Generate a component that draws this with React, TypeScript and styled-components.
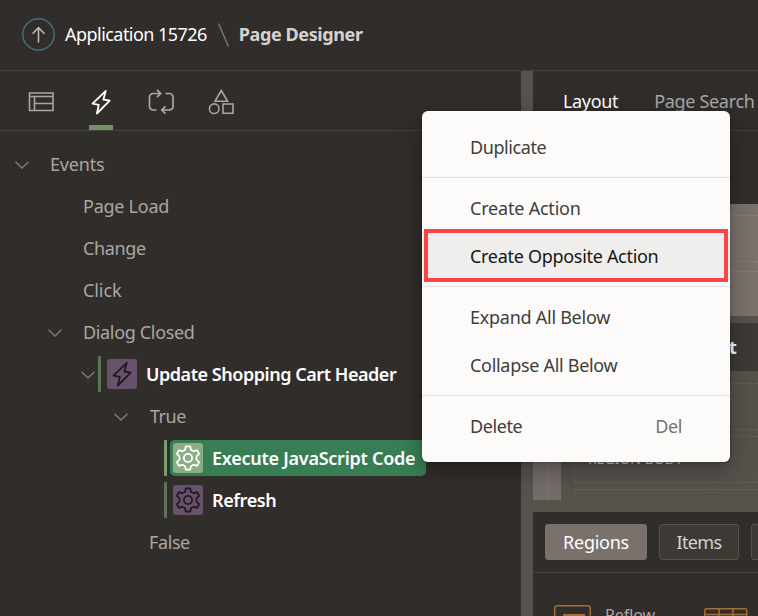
import React from 'react';
import styled, { createGlobalStyle } from 'styled-components';

const GlobalStyle = createGlobalStyle`
  * { box-sizing: border-box; }
  body {
    margin: 0;
    overflow: hidden;
    background: #312d2a;
    font-family: "Noto Sans", sans-serif;
    font-size: 18px;
    line-height: 24px;
    white-space: nowrap;
  }
`;

const Page = styled.div`
  position: relative;
  display: flex;
  flex-direction: column;
  width: 758px;
  height: 616px;
  overflow: hidden;
  background: #312d2a;
`;

const Label = styled.span<{ $track?: number }>`
  letter-spacing: ${p => p.$track ?? -0.25}px;
`;

const Header = styled.header`
  display: flex;
  align-items: center;
  flex: none;
  height: 71px;
  padding: 0 22px 1px;
  border-bottom: 1px solid #45413d;
  color: #fff;
`;

const Crumb = styled(Label)`
  padding-bottom: 2px;
`;

const Divider = styled.svg`
  margin: 1px 10px 0 11px;
`;

const UpIcon = styled.svg`
  margin-right: 10px;
`;

const PageTitle = styled(Crumb)`
  color: #d5d3d1;
  font-weight: 700;
`;

const Workspace = styled.main`
  display: flex;
  flex: 1;
  min-height: 0;
`;

const TreePane = styled.section`
  width: 521px;
  flex: none;
`;

const Toolbar = styled.nav`
  display: flex;
  height: 60px;
  padding-left: 11px;
  border-bottom: 1px solid #45413d;
`;

const ToolTab = styled.div<{ $active?: boolean }>`
  display: flex;
  flex-direction: column;
  align-items: center;
  width: 60px;
  padding-top: 15px;
  color: ${p => (p.$active ? '#fff' : '#aaa6a2')};
  &::after {
    content: '';
    width: 24px;
    height: 5px;
    margin-top: 7px;
    background: ${p => (p.$active ? '#6b9465' : 'transparent')};
  }
`;

const Tree = styled.div`
  padding-top: 12px;
`;

const TreeRow = styled.div<{ $indent: number; $strong?: boolean }>`
  display: flex;
  align-items: center;
  height: 42px;
  padding-left: ${p => p.$indent}px;
  color: ${p => (p.$strong ? '#fff' : '#aaa7a3')};
  font-weight: ${p => (p.$strong ? 600 : 400)};
`;

const Chevron = styled.svg<{ $gap?: number }>`
  flex: none;
  margin: 2px ${p => p.$gap ?? 21}px 0 0;
  color: #7d7873;
`;

const Rail = styled.i<{ $bright?: boolean }>`
  width: 3px;
  height: 36px;
  margin-right: 3px;
  border-radius: 1px;
  background: ${p => (p.$bright ? '#78a06e' : '#5b7656')};
`;

const NodePill = styled.div<{ $selected?: boolean }>`
  display: flex;
  align-items: center;
  gap: 9px;
  height: 36px;
  padding: 0 11px 0 3px;
  border-radius: 5px;
  background: ${p => (p.$selected ? '#387e54' : 'transparent')};
`;

const NodeIcon = styled.span<{ $selected?: boolean }>`
  display: flex;
  align-items: center;
  justify-content: center;
  width: 30px;
  height: 30px;
  border-radius: 3px;
  background: ${p => (p.$selected ? '#8cae84' : '#68516c')};
  color: ${p => (p.$selected ? '#fff' : '#1f1a22')};
`;

const Splitter = styled.div`
  width: 12px;
  flex: none;
  background: #57524c;
`;

const DesignPane = styled.section`
  display: flex;
  flex-direction: column;
  flex: 1;
  min-width: 0;
  overflow: hidden;
`;

const DesignTabs = styled.nav`
  display: flex;
  gap: 37px;
  height: 60px;
  flex: none;
  padding: 18px 0 0 29px;
  border-bottom: 1px solid #45413d;
  color: #aaa7a3;
`;

const ActiveLabel = styled(Label)`
  padding-left: 1px;
  margin-right: -1px;
  color: #fff;
`;

const Canvas = styled.div`
  display: grid;
  grid-template-columns: 28px 1fr;
  height: 296px;
  margin-top: 73px;
  flex: none;
  background: #55514b;
`;

const CanvasColumn = styled.div`
  background: linear-gradient(90deg, transparent 14px, #7d7672 14px, #7d7672 15px, transparent 15px), #746c69;
`;

const CanvasBody = styled.div`
  display: flex;
  flex-direction: column;
`;

const HeroRegion = styled.div`
  height: 112px;
  padding-top: 11px;
  background: #7a716c;
`;

const HeroSlot = styled.div`
  height: 47px;
  border: dotted #8a817c;
  border-width: 1px 0;
  & + & {
    height: 44px;
    margin-top: 9px;
    border-bottom: 0;
  }
`;

const RegionTitle = styled.div`
  height: 48px;
  margin-top: 7px;
  padding: 12px 0 0 168px;
  background: #3d3a35;
  color: #fff;
  font-weight: 700;
`;

const Slot = styled.div<{ $height: number; $gap: number }>`
  height: ${p => p.$height}px;
  flex: none;
  margin: ${p => p.$gap}px 0 0 13px;
  border: 1px dotted #69655f;
  border-width: 1px 0 1px 1px;
  &:last-child { border-bottom: 0; }
`;

const SlotCaption = styled.div`
  padding: 10px 0 0 13px;
  color: #d0cdca;
  font-size: 14px;
`;

const Gallery = styled.div`
  flex: 1;
  border-top: 12px solid #57524c;
`;

const GalleryTabs = styled.div`
  display: flex;
  gap: 12px;
  height: 61px;
  padding: 12px 0 0 12px;
  border-bottom: 1px solid #45413d;
`;

const GalleryButton = styled.button<{ $active?: boolean; $width: number }>`
  flex: none;
  width: ${p => p.$width}px;
  height: 36px;
  padding: 0;
  border: 1px solid ${p => (p.$active ? '#7a716c' : '#57524d')};
  border-radius: 3px;
  background: ${p => (p.$active ? '#7a716c' : '#3d3a35')};
  color: ${p => (p.$active ? '#fff' : '#d5d3d1')};
  font: inherit;
`;

const GalleryItems = styled.div`
  display: flex;
  align-items: flex-start;
  padding: 32px 0 0 21px;
  color: #aaa7a3;
  font-size: 16px;
`;

const ReflowLabel = styled(Label)`
  width: 99px;
  margin: -2px 0 0 14px;
`;

const GridIcon = styled.svg`
  flex: none;
  margin-top: 3px;
`;

const Menu = styled.div`
  position: absolute;
  left: 422px;
  top: 111px;
  width: 308px;
  padding: 12px 0;
  border-radius: 6px;
  background: #fcfbfa;
  color: #403e3c;
  box-shadow: 0 8px 24px rgba(0, 0, 0, 0.3), 0 1px 4px rgba(0, 0, 0, 0.2);
`;

const MenuItem = styled.div<{ $hover?: boolean }>`
  position: relative;
  display: flex;
  align-items: center;
  justify-content: space-between;
  height: 48px;
  padding: 0 48px;
  background: ${p => (p.$hover ? '#f0eeed' : 'transparent')};
  color: ${p => (p.$hover ? '#161513' : 'inherit')};
`;

const MenuRule = styled.div`
  height: 1px;
  margin: 6px 0;
  background: #e1dfdd;
`;

const Shortcut = styled(Label)`
  color: #76726f;
`;

const Highlight = styled.span`
  position: absolute;
  inset: -3px 2px -2px;
  border: 4px solid #fc4448;
`;

const ChevronDown = ({ gap }: { gap?: number }) => (
  <Chevron $gap={gap} width="14" height="8" viewBox="0 0 14 8" fill="none" stroke="currentColor" strokeWidth="1.5">
    <path d="M.5.7 7 7 13.5.7" />
  </Chevron>
);

const Bolt = ({ size = 24 }: { size?: number }) => (
  <svg width={size} height={(size * 32) / 24} viewBox="0 0 24 32" fill="none" stroke="currentColor" strokeWidth="1.8" strokeLinejoin="round">
    <path d="M16.800 4.800 3.500 17.600l6.300 1.200-1.900 8.700L20.700 14.700l-6.300-1.200z" />
  </svg>
);

const Gear = () => (
  <svg width="26" height="26" viewBox="0 0 26 26" fill="none" stroke="currentColor" strokeWidth="1.8" strokeLinejoin="round">
    <path d="M10.800 1.300h4.400l.7 3.500 2.600 1.500 3.500-1.200 2.200 3.800-2.700 2.400v3.400l2.700 2.400-2.200 3.800-3.500-1.200-2.600 1.500-.7 3.500h-4.400l-.7-3.500-2.600-1.500L4 20.900l-2.200-3.800 2.700-2.400v-3.400L1.800 8.900 4 5.100l3.500 1.200 2.600-1.500z" />
    <circle cx="13" cy="13" r="4.100" />
  </svg>
);

export default function App() {
  return (
    <Page>
      <GlobalStyle />
      <Header>
        <UpIcon width="33" height="33" viewBox="0 0 33 33" fill="none">
          <circle cx="16.500" cy="16.500" r="15.700" stroke="#41727e" strokeWidth="1.400" />
          <path d="M16.500 24.500V9.800M10.500 15.700l6-6 6 6" stroke="#bcb8b4" strokeWidth="1.600" />
        </UpIcon>
        <Crumb $track={-0.54}>Application 15726</Crumb>
        <Divider width="11" height="24" viewBox="0 0 11 24" fill="none" stroke="#807a75" strokeWidth="1.400">
          <path d="M.5.5l10 23" />
        </Divider>
        <PageTitle $track={-0.4}>Page Designer</PageTitle>
      </Header>
      <Workspace>
        <TreePane>
          <Toolbar>
            <ToolTab>
              <svg width="26" height="32" viewBox="0 0 26 32" fill="none" stroke="currentColor" strokeWidth="1.600">
                <path d="M1.500 7h23.500v17.500H1.500zM1.500 10.500H25M6.500 10.500v14M6.500 17.500H25" />
              </svg>
            </ToolTab>
            <ToolTab $active><Bolt /></ToolTab>
            <ToolTab>
              <svg width="26" height="32" viewBox="0 0 26 32" fill="none" stroke="currentColor" strokeWidth="1.700">
                <path d="M8.500 24H5a3.500 3.500 0 0 1-3.500-3.500V11A3.500 3.500 0 0 1 5 7.500h7.500M9 3.800l3.700 3.700L9 11.200M17.500 7.500h4A3.500 3.500 0 0 1 25 11v9.500a3.500 3.500 0 0 1-3.500 3.500H14M17.500 20.300 13.800 24l3.700 3.700" />
              </svg>
            </ToolTab>
            <ToolTab>
              <svg width="26" height="32" viewBox="0 0 26 32" fill="none" stroke="currentColor" strokeWidth="1.600">
                <path d="M13.300 4.500 7 15.300h12.600zM15 18h10v9.300H15z" />
                <circle cx="6.200" cy="22.700" r="4.800" />
              </svg>
            </ToolTab>
          </Toolbar>
          <Tree>
            <TreeRow $indent={15}><ChevronDown /><Label $track={-0.18}>Events</Label></TreeRow>
            <TreeRow $indent={83}><Label $track={-0.26}>Page Load</Label></TreeRow>
            <TreeRow $indent={83}><Label $track={-0.36}>Change</Label></TreeRow>
            <TreeRow $indent={83}><Label $track={-0.08}>Click</Label></TreeRow>
            <TreeRow $indent={48}><ChevronDown /><Label $track={-0.34}>Dialog Closed</Label></TreeRow>
            <TreeRow $indent={81} $strong>
              <ChevronDown gap={3} />
              <Rail />
              <NodePill>
                <NodeIcon><Bolt size={24} /></NodeIcon>
                <Label $track={-0.46}>Update Shopping Cart Header</Label>
              </NodePill>
            </TreeRow>
            <TreeRow $indent={114}><ChevronDown gap={22} /><Label $track={-0.5}>True</Label></TreeRow>
            <TreeRow $indent={164} $strong>
              <Rail $bright />
              <NodePill $selected>
                <NodeIcon $selected><Gear /></NodeIcon>
                <Label $track={-0.26}>Execute JavaScript Code</Label>
              </NodePill>
            </TreeRow>
            <TreeRow $indent={164} $strong>
              <Rail />
              <NodePill>
                <NodeIcon><Gear /></NodeIcon>
                <Label $track={-0.4}>Refresh</Label>
              </NodePill>
            </TreeRow>
            <TreeRow $indent={149}><Label $track={-0.4}>False</Label></TreeRow>
          </Tree>
        </TreePane>
        <Splitter />
        <DesignPane>
          <DesignTabs>
            <ActiveLabel $track={-0.34}>Layout</ActiveLabel>
            <Label $track={-0.32}>Page Search</Label>
          </DesignTabs>
          <Canvas>
            <CanvasColumn />
            <CanvasBody>
              <HeroRegion><HeroSlot /><HeroSlot /></HeroRegion>
              <RegionTitle>t</RegionTitle>
              <Slot $height={47} $gap={12} />
              <Slot $height={47} $gap={6}>
                <SlotCaption>REGION BODY</SlotCaption>
              </Slot>
              <Slot $height={11} $gap={6} />
            </CanvasBody>
          </Canvas>
          <Gallery>
            <GalleryTabs>
              <GalleryButton $active $width={102}><Label $track={-0.27}>Regions</Label></GalleryButton>
              <GalleryButton $width={80}><Label $track={-0.6}>Items</Label></GalleryButton>
              <GalleryButton $width={90} />
            </GalleryTabs>
            <GalleryItems>
              <svg width="37" height="20" viewBox="0 0 37 20" fill="none" stroke="#a07038" strokeWidth="1.500">
                <rect x=".75" y=".75" width="35.500" height="35" rx="3" />
                <path d="M9 10h22" strokeWidth="2" />
              </svg>
              <ReflowLabel $track={-0.1}>Reflow</ReflowLabel>
              <GridIcon width="44" height="20" viewBox="0 0 44 20" fill="none" stroke="#a07038" strokeWidth="1.500">
                <rect x=".75" y=".75" width="42" height="30" rx="2" />
                <path d="M15 1v19M29 1v19M1 6.500h42" />
              </GridIcon>
            </GalleryItems>
          </Gallery>
        </DesignPane>
      </Workspace>
      <Menu>
        <MenuItem><Label $track={-0.42}>Duplicate</Label></MenuItem>
        <MenuRule />
        <MenuItem><Label $track={-0.2}>Create Action</Label></MenuItem>
        <MenuItem $hover><Label $track={-0.3}>Create Opposite Action</Label><Highlight /></MenuItem>
        <MenuRule />
        <MenuItem><Label $track={-0.26}>Expand All Below</Label></MenuItem>
        <MenuItem><Label $track={-0.3}>Collapse All Below</Label></MenuItem>
        <MenuRule />
        <MenuItem><Label $track={-0.42}>Delete</Label><Shortcut $track={-0.4}>Del</Shortcut></MenuItem>
      </Menu>
    </Page>
  );
}
